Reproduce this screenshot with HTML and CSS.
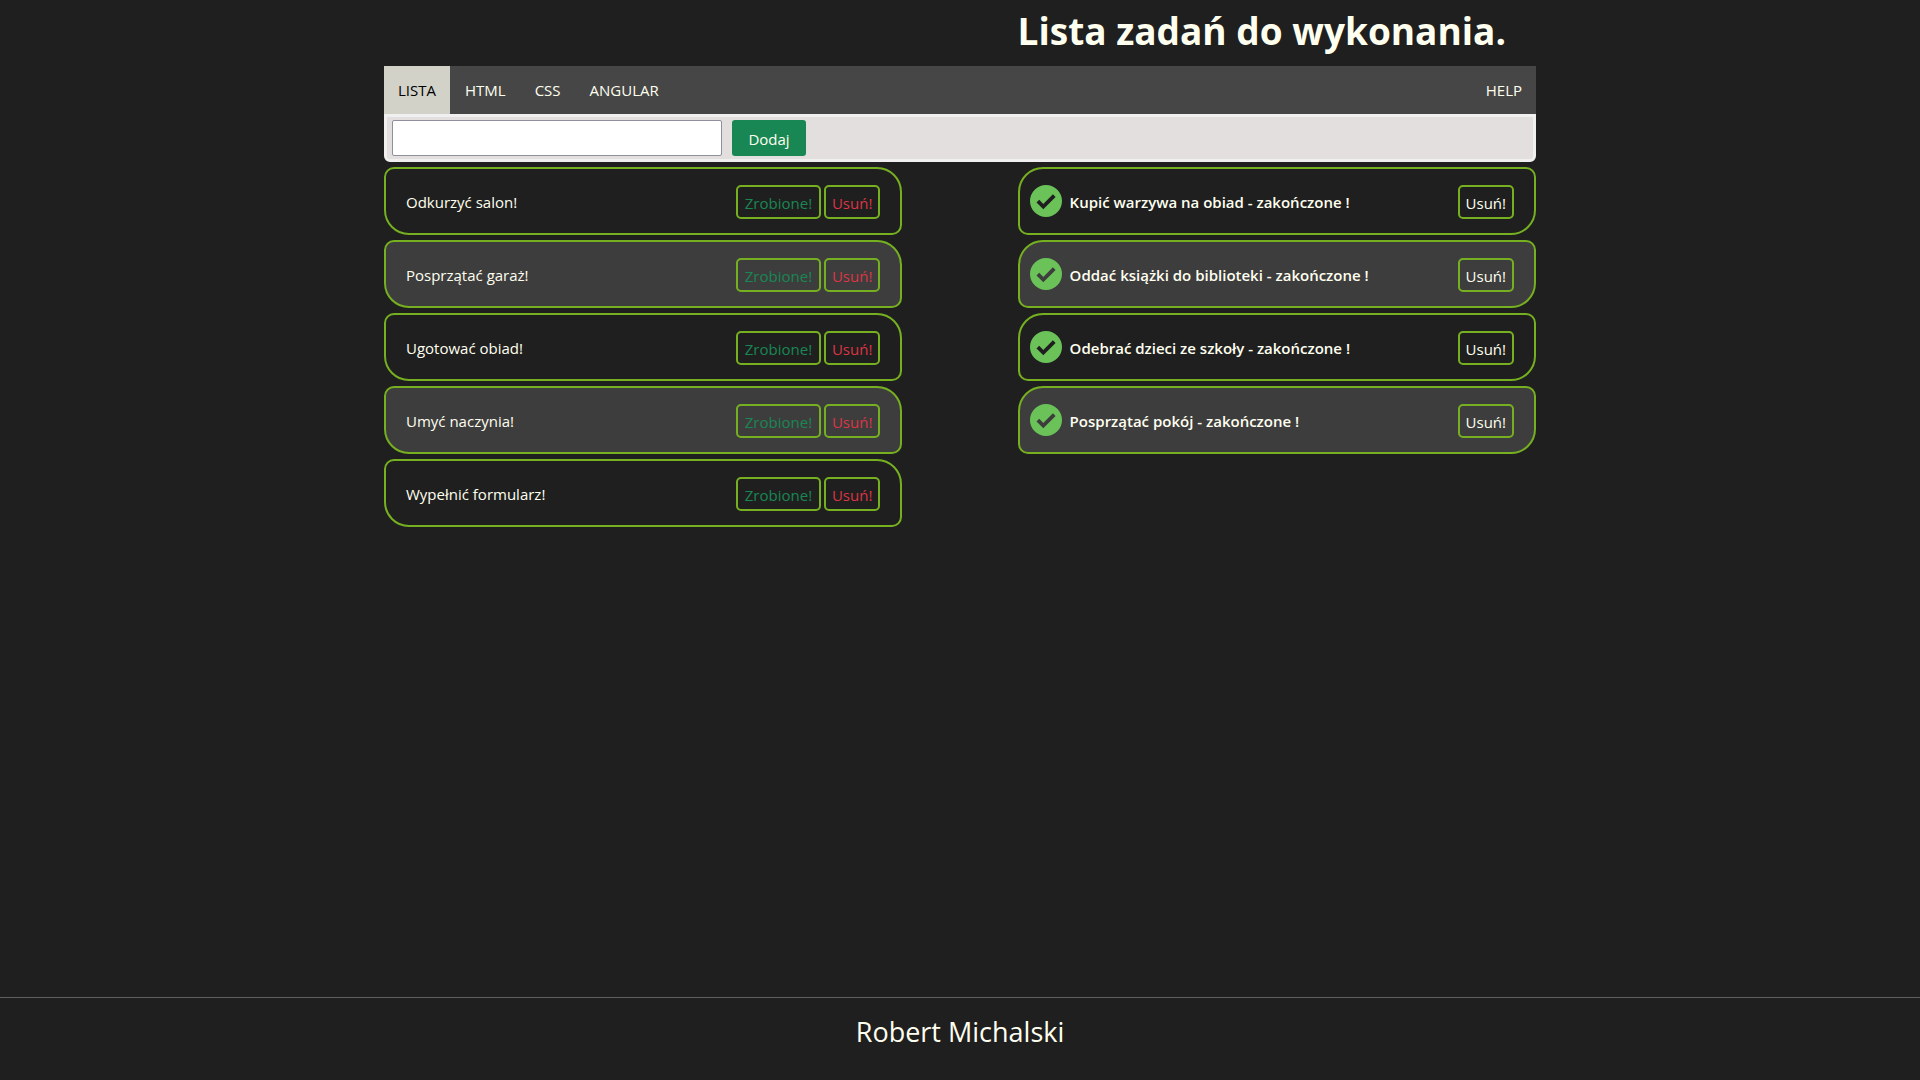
FILE: index.html
```html
<!DOCTYPE html>
<html lang="pl">
<head>
<meta charset="utf-8">
<meta name="viewport" content="width=device-width, initial-scale=1">
<title>Lista zadań</title>
<link rel="stylesheet" href="styles.css">
</head>
<body>
<svg class="sprite" aria-hidden="true">
  <symbol id="check" viewBox="0 0 32 32">
    <path fill="#6ac259" fill-rule="evenodd" d="M16 0a16 16 0 1 0 0 32a16 16 0 1 0 0-32zM13.300 24.200L6.500 17.500L9.200 14.800L13.300 18.900L22.900 9.200L25.600 11.900z"/>
  </symbol>
</svg>
<div class="container">
  <header class="header"><h1 class="title">Lista zadań do wykonania.</h1></header>
  <nav class="nav">
    <a class="nav-link active" href="#lista">LISTA</a>
    <a class="nav-link" href="#html">HTML</a>
    <a class="nav-link" href="#css">CSS</a>
    <a class="nav-link" href="#angular">ANGULAR</a>
    <a class="nav-link nav-end" href="#help">HELP</a>
  </nav>
  <form class="add-form">
    <input class="add-input" type="text" aria-label="Nowe zadanie">
    <button class="add-button" type="button">Dodaj</button>
  </form>
  <main class="lists">
    <ul class="list todo">
      <li class="task"><span class="task-name">Odkurzyć salon!</span><button class="btn success" type="button">Zrobione!</button><button class="btn danger" type="button">Usuń!</button></li>
      <li class="task"><span class="task-name">Posprzątać garaż!</span><button class="btn success" type="button">Zrobione!</button><button class="btn danger" type="button">Usuń!</button></li>
      <li class="task"><span class="task-name">Ugotować obiad!</span><button class="btn success" type="button">Zrobione!</button><button class="btn danger" type="button">Usuń!</button></li>
      <li class="task"><span class="task-name">Umyć naczynia!</span><button class="btn success" type="button">Zrobione!</button><button class="btn danger" type="button">Usuń!</button></li>
      <li class="task"><span class="task-name">Wypełnić formularz!</span><button class="btn success" type="button">Zrobione!</button><button class="btn danger" type="button">Usuń!</button></li>
    </ul>
    <ul class="list done">
      <li class="task"><svg class="icon" aria-hidden="true"><use href="#check"/></svg><span class="task-name">Kupić warzywa na obiad - zakończone !</span><button class="btn" type="button">Usuń!</button></li>
      <li class="task"><svg class="icon" aria-hidden="true"><use href="#check"/></svg><span class="task-name">Oddać książki do biblioteki - zakończone !</span><button class="btn" type="button">Usuń!</button></li>
      <li class="task"><svg class="icon" aria-hidden="true"><use href="#check"/></svg><span class="task-name">Odebrać dzieci ze szkoły - zakończone !</span><button class="btn" type="button">Usuń!</button></li>
      <li class="task"><svg class="icon" aria-hidden="true"><use href="#check"/></svg><span class="task-name">Posprzątać pokój - zakończone !</span><button class="btn" type="button">Usuń!</button></li>
    </ul>
  </main>
</div>
<footer class="footer">Robert Michalski</footer>
</body>
</html>
```
FILE: styles.css
```css
* {
  box-sizing: border-box;
}

body {
  display: flex;
  flex-direction: column;
  min-height: 100vh;
  margin: 0;
  background: #1f1f1f;
  color: ivory;
  font: 15px/24px "Segoe UI", "Open Sans", sans-serif;
}

button,
input {
  font: inherit;
}

.sprite {
  display: none;
}

.container {
  width: 60%;
  margin: 0 auto;
  flex: 1;
}

.header {
  display: flex;
  justify-content: flex-end;
  padding-bottom: 4px;
}

.title {
  width: 45%;
  margin: 0;
  font-size: 37px;
  line-height: 62px;
  font-weight: 700;
  white-space: nowrap;
}

.nav {
  display: flex;
  gap: 1px;
  background: #464646;
}

.nav-link {
  padding: 12px 14px;
  color: ivory;
  text-decoration: none;
}

.nav-link.active {
  background: #d2d2c9;
  color: #000;
}

.nav-end {
  margin-left: auto;
}

.add-form {
  display: flex;
  gap: 10px;
  padding: 3px 5px;
  background: #e4dfdf;
  border: 3px solid #f0f0f0;
  border-radius: 0 0 6px 6px;
}

.add-input {
  width: 330px;
  height: 36px;
  padding: 0 8px;
  background: #fff;
  border: 1px solid #8f8f9d;
  border-radius: 2px;
}

.add-button {
  min-width: 74px;
  padding: 2px 16px 0;
  background: #198754;
  border: 0;
  border-radius: 3px;
  color: ivory;
}

.lists {
  display: flex;
  justify-content: space-between;
  align-items: flex-start;
  padding-top: 5px;
}

.list {
  display: grid;
  gap: 5px;
  width: 45%;
  margin: 0;
  padding: 0;
  list-style: none;
}

.task {
  display: flex;
  align-items: center;
  gap: 3px;
  height: 68px;
  padding: 0 20px;
  border: 2px solid #76b021;
  border-radius: 10px 25px;
}

.task:nth-child(even) {
  background: #3d3d3d;
}

.done .task {
  padding-left: 10px;
  border-radius: 25px 10px;
  font-weight: 600;
}

.task-name {
  flex: 1;
  padding-top: 2px;
}

.icon {
  width: 32px;
  height: 32px;
  margin-right: 5px;
}

.btn {
  height: 34px;
  margin-top: 2px;
  padding: 2px 6px 0;
  background: transparent;
  border: 2px solid #76b021;
  border-radius: 5px;
  color: ivory;
  font-weight: 400;
}

.success {
  min-width: 85px;
  color: #198754;
}

.danger {
  color: #dc3545;
}

.footer {
  padding: 13px 0 27px;
  border-top: 1px solid #5f5f5f;
  font-size: 27px;
  line-height: 42px;
  text-align: center;
}
```
